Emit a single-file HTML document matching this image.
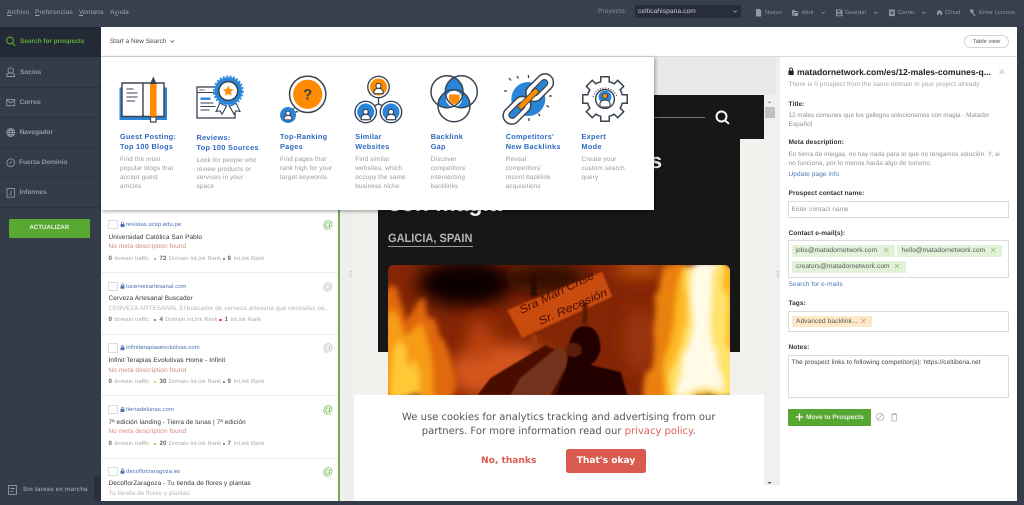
<!DOCTYPE html>
<html><head><meta charset="utf-8"><title>Prospects</title>
<style>
html,body{margin:0;padding:0;width:1024px;height:505px;overflow:hidden;background:#343b49}
#r{position:absolute;left:0;top:0;width:1024px;height:505px;overflow:hidden;background:#343b49;font-family:"Liberation Sans",Arial,sans-serif;filter:blur(.3px);text-rendering:geometricPrecision}
.a{position:absolute}
.t{position:absolute;white-space:nowrap;line-height:10px;height:10px}
.m{font-size:6.5px;color:#9aa4b5;letter-spacing:.1px}
.m u{text-decoration:underline}
.tb{font-size:5.7px;color:#8f99aa;letter-spacing:.1px}
.s{font-size:6.6px;color:#8e98a8;font-weight:bold;letter-spacing:-.08px}
.d{height:1px;background:#2b313d;left:0;width:101px}
.h{font-size:7.3px;line-height:10.2px;height:auto;color:#2c68c0;font-weight:bold;letter-spacing:.3px}
.p{font-size:6.4px;line-height:8.7px;height:auto;color:#9a9a9a;letter-spacing:.14px}
.dm{font-size:5.85px;color:#4c72b4;letter-spacing:.08px}
.ti{font-size:6.45px;color:#333;letter-spacing:.1px}
.no{font-size:6.45px;color:#d08a80;letter-spacing:.1px}
.gr{font-size:6.25px;color:#b5b5b5;letter-spacing:.1px}
.l{font-size:5.7px;color:#aaa;letter-spacing:.06px}
.n{font-size:6.2px;color:#666;font-weight:bold}
.dot{position:absolute;width:2.4px;height:2.4px;border-radius:50%}
.cb{position:absolute;left:108.3px;width:7.4px;height:7.4px;border:.7px solid #dcdcdc;background:#fff}
.dv{position:absolute;left:101px;width:237px;height:1px;background:#eee}
.lb{font-size:6.6px;font-weight:bold;color:#333;letter-spacing:.05px}
.x{font-size:6.4px;color:#909090;letter-spacing:.1px}
.lk{font-size:6.5px;color:#4c78b8;letter-spacing:.08px}
.box{position:absolute;left:788px;width:221px;border:.7px solid #dcdcdc;background:#fff;box-sizing:border-box}
.chip{position:absolute;background:#e2f2d8}
.ct{font-size:6.55px;color:#555;letter-spacing:.08px}
.cx{font-size:8px;color:#8fc27a}
</style></head><body><div id="r">

<!-- top bar -->
<div class="a" style="left:0;top:0;width:1024px;height:27px;background:#393f4d"></div>
<div class="t m" style="left:7px;top:7.7px"><u>A</u>rchivo</div>
<div class="t m" style="left:35px;top:7.7px"><u>P</u>referencias</div>
<div class="t m" style="left:79px;top:7.7px"><u>V</u>entana</div>
<div class="t m" style="left:110px;top:7.7px">A<u>y</u>uda</div>
<div class="t" style="left:598px;top:6.5px;font-size:6.4px;color:#8a94a6;letter-spacing:.2px">Proyecto:</div>
<div class="a" style="left:634.5px;top:4.5px;width:106.5px;height:13.5px;background:#272d39;border-radius:1px"></div>
<div class="t" style="left:638px;top:6.7px;font-size:6.6px;color:#cfd4dc;letter-spacing:.1px">celticahispana.com</div>
<div class="t tb" style="left:765px;top:7.7px">Nuevo</div>
<div class="t tb" style="left:801.5px;top:7.7px">Abrir</div>
<div class="t tb" style="left:845px;top:7.7px">Guardar</div>
<div class="t tb" style="left:898px;top:7.7px">Cerrar</div>
<div class="t tb" style="left:945px;top:7.7px">Cloud</div>
<div class="t tb" style="left:979px;top:7.7px">Enter License</div>

<!-- sidebar -->
<div class="a" style="left:0;top:27px;width:101px;height:30px;background:#232935"></div>
<div class="a d" style="top:87px"></div><div class="a d" style="top:117px"></div><div class="a d" style="top:147px"></div><div class="a d" style="top:177px"></div><div class="a d" style="top:207px"></div>
<div class="t s" style="left:20px;top:37.3px;color:#5da83a">Search for prospects</div>
<div class="t s" style="left:20px;top:68px">Socios</div>
<div class="t s" style="left:19.5px;top:98px">Correo</div>
<div class="t s" style="left:19.5px;top:128px">Navegador</div>
<div class="t s" style="left:19px;top:158px">Fuerza Dominio</div>
<div class="t s" style="left:19.5px;top:188px">Informes</div>
<div class="a" style="left:8.5px;top:218.5px;width:81.5px;height:19px;background:#58a832;border-radius:1px"></div>
<div class="t" style="left:8.5px;width:81.5px;text-align:center;top:223.3px;font-size:6.2px;font-weight:bold;color:#e8f3e0">ACTUALIZAR</div>
<div class="t" style="left:23px;top:485.3px;font-size:6.2px;color:#8e98a8;letter-spacing:.12px;font-weight:bold">Sin tareas en marcha</div>
<div class="a" style="left:94px;top:476px;width:7px;height:25px;background:#2a303c"></div>

<!-- main -->
<div class="a" style="left:101px;top:27px;width:916px;height:474px;background:#fff"></div>
<div class="a" style="left:101px;top:56px;width:916px;height:1px;background:#dcdcdc"></div>
<div class="t" style="left:110px;top:36.7px;font-size:6.4px;color:#444;letter-spacing:.05px">Start a New Search</div>
<div class="a" style="left:964px;top:35px;width:45px;height:13px;border:.7px solid #d5d5d5;border-radius:7px;box-sizing:border-box"></div>
<div class="t" style="left:964px;width:45px;text-align:center;top:36.5px;font-size:5.9px;color:#555">Table view</div>

<!-- preview -->
<div class="a" style="left:340px;top:57px;width:440px;height:444px;background:#efefef"></div>
<div class="a" style="left:353px;top:57px;width:423px;height:38px;background:#e9e9e9"></div>
<div class="a" style="left:353px;top:95px;width:411px;height:300px;background:#f3f1ed"></div>
<div class="a" style="left:378px;top:95px;width:362px;height:257px;background:#171717"></div>
<div class="a" style="left:640px;top:95px;width:124px;height:44px;background:#171717"></div>
<div class="a" style="left:378px;top:116.5px;width:327px;height:1px;background:#777"></div>
<div class="t" style="left:388px;top:197px;font-size:23px;line-height:12px;height:12px;font-weight:bold;color:#fff">con magia</div>
<div class="t" style="left:640px;top:157px;width:22px;font-size:21px;text-align:right;font-weight:bold;color:#f2f2f2">s</div>
<div class="t" style="left:388px;top:233px;font-size:12px;font-weight:bold;color:#b5b5b5;transform-origin:0 50%;transform:scaleX(.92)">GALICIA, SPAIN</div>
<div class="a" style="left:388px;top:245.5px;width:85px;height:1px;background:#999"></div>

<!-- fire -->
<svg class="a" style="left:387.5px;top:265px;border-radius:5px 5px 0 0" width="342.5" height="130" viewBox="387.5 265 342.5 130">
<defs>
<filter id="b6" x="-40%" y="-40%" width="180%" height="180%"><feGaussianBlur stdDeviation="8"/></filter>
<filter id="fl" x="-20%" y="-20%" width="140%" height="140%"><feTurbulence type="fractalNoise" baseFrequency=".04 .012" numOctaves="3" seed="4"/><feDisplacementMap in="SourceGraphic" scale="24" xChannelSelector="R" yChannelSelector="G"/><feGaussianBlur stdDeviation="3"/></filter>
<filter id="b1"><feGaussianBlur stdDeviation=".8"/></filter>
</defs>
<rect x="387" y="265" width="344" height="130" fill="#842505"/>
<g filter="url(#b6)">
<ellipse cx="465" cy="283" rx="48" ry="24" fill="#0e0200"/>
<ellipse cx="545" cy="278" rx="42" ry="16" fill="#300a01"/>
<ellipse cx="505" cy="372" rx="58" ry="28" fill="#d4541a"/>
<ellipse cx="480" cy="340" rx="14" ry="20" fill="#b8400c"/>
<ellipse cx="640" cy="340" rx="16" ry="34" fill="#9a3507"/>
<ellipse cx="640" cy="268" rx="26" ry="7" fill="#cf6410"/>
</g>
<g filter="url(#fl)">
<path d="M390 280 L406 320 L426 296 L444 342 L452 400 L380 400 L380 295Z" fill="#e0680a"/>
<path d="M392 305 L406 335 L424 322 L430 400 L385 400 L385 325Z" fill="#f89c16"/>
<path d="M396 340 L410 348 L418 400 L390 400Z" fill="#ffc836"/>
<path d="M650 400 L658 345 L652 295 L664 262 L740 262 L740 400Z" fill="#ea800c"/>
<path d="M662 400 L672 345 L670 300 L680 262 L740 262 L740 400Z" fill="#ffb820"/>
<path d="M670 400 L680 345 L682 262 L724 262 L726 330 L732 400Z" fill="#ffe46c"/>
<path d="M678 392 L688 340 L692 262 L714 262 L716 330 L720 392Z" fill="#fffbe6"/>
</g>
<g filter="url(#b1)">
<path d="M506.7 310 L601.7 271.7 L611.7 296.7 L521.7 338Z" fill="#c94c0e"/>
<rect x="531" y="335" width="6" height="30" fill="#9a3a0a"/>
<rect x="582" y="302" width="5" height="22" fill="#5a1a05"/>
<rect x="530" y="276" width="6" height="20" fill="#2c0a03"/>
<path d="M477 395 L490 378 L520 360 L545 345 L565 355 L566 378 L590 395Z" fill="#4a0f03"/>
<path d="M520 378 L560 345 L568 362 L550 395 L510 395Z" fill="#73301c"/>
<path d="M568 350 Q570 326 585 326 Q600 328 600 350 Q596 362 590 365 L620 372 L627 395 L555 395 L565 370Z" fill="#240502"/>
<ellipse cx="573" cy="350" rx="8" ry="7" fill="#5a1a08"/>
</g>
<g font-family="Liberation Sans,sans-serif" font-style="italic" font-size="11" fill="#4a0e04">
<text x="521" y="314" textLength="82" lengthAdjust="spacingAndGlyphs" transform="rotate(-26 521 314)">Sra Mari Crise</text>
<text x="540" y="325" textLength="74" lengthAdjust="spacingAndGlyphs" transform="rotate(-24 540 325)">Sr. Recesión</text>
</g>
</svg>

<!-- scrollbar -->
<div class="a" style="left:764px;top:95px;width:12px;height:390px;background:#f0f0f0"></div>
<div class="a" style="left:765px;top:107px;width:10px;height:11px;background:#c1c1c1"></div>

<!-- cookie -->
<div class="a" style="left:353.5px;top:394.5px;width:410.5px;height:106.5px;background:#fff"></div>
<div class="a" style="left:764px;top:485px;width:16px;height:16px;background:#fff"></div>
<div class="t" style="left:353.5px;width:410.5px;text-align:center;top:411.3px;font-family:'DejaVu Sans',sans-serif;font-size:10px;line-height:14px;height:14px;color:#555">We use cookies for analytics tracking and advertising from our</div>
<div class="t" style="left:353.5px;width:410.5px;text-align:center;top:425.3px;font-family:'DejaVu Sans',sans-serif;font-size:10px;line-height:14px;height:14px;color:#555">partners. For more information read our <span style="color:#e0605a">privacy policy</span>.</div>
<div class="t" style="left:481px;top:455.5px;font-family:'DejaVu Sans',sans-serif;font-weight:bold;font-size:9.1px;color:#dd5b52">No, thanks</div>
<div class="a" style="left:566px;top:449px;width:80px;height:24px;background:#db5a50;border-radius:2.5px"></div>
<div class="t" style="left:566px;width:80px;text-align:center;top:455.5px;font-family:'DejaVu Sans',sans-serif;font-weight:bold;font-size:9.1px;color:#fff">That's okay</div>

<!-- list -->
<div class="a" style="left:101px;top:200px;width:237px;height:301px;background:#fff"></div>
<div class="a" style="left:338px;top:205px;width:2px;height:296px;background:#6eb04a"></div>
<div class="dv" style="top:272px"></div><div class="dv" style="top:334px"></div><div class="dv" style="top:395px"></div><div class="dv" style="top:457.5px"></div>

<div class="cb" style="top:220px"></div><div class="t dm" style="left:126px;top:220px">revistas.ucsp.edu.pe</div>
<div class="t ti" style="left:108.5px;top:232.7px">Universidad Católica San Pablo</div>
<div class="t no" style="left:108.5px;top:242.3px">No meta description found</div>
<div class="t n" style="left:108.5px;top:253.7px">0</div><div class="t l" style="left:114.3px;top:253.7px">domain traffic</div><div class="dot" style="left:154px;top:257.5px;background:#6eb04a"></div><div class="t n" style="left:159.5px;top:253.7px">72</div><div class="t l" style="left:168.7px;top:253.7px">Domain InLink Rank</div><div class="dot" style="left:222.5px;top:257.5px;background:#d0401c"></div><div class="t n" style="left:227.5px;top:253.7px">8</div><div class="t l" style="left:233.7px;top:253.7px">InLink Rank</div>

<div class="cb" style="top:281.7px"></div><div class="t dm" style="left:126px;top:281.7px">tucervezartesanal.com</div>
<div class="t ti" style="left:108.5px;top:294.3px">Cerveza Artesanal Buscador</div>
<div class="t gr" style="left:108.5px;top:304px">CERVEZA ARTESANAL El buscador de cerveza artesana que necesitas pa...</div>
<div class="t n" style="left:108.5px;top:315.3px">0</div><div class="t l" style="left:114.3px;top:315.3px">domain traffic</div><div class="dot" style="left:154px;top:319.1px;background:#d0401c"></div><div class="t n" style="left:159.5px;top:315.3px">4</div><div class="t l" style="left:165.3px;top:315.3px">Domain InLink Rank</div><div class="dot" style="left:219.3px;top:319.1px;background:#d0401c"></div><div class="t n" style="left:224.5px;top:315.3px">1</div><div class="t l" style="left:230.5px;top:315.3px">InLink Rank</div>

<div class="cb" style="top:343.4px"></div><div class="t dm" style="left:126px;top:343.3px">infiniterapiasevolutivas.com</div>
<div class="t ti" style="left:108.5px;top:356px">Infinit Terapias Evolutivas Home - Infinit</div>
<div class="t no" style="left:108.5px;top:365.7px">No meta description found</div>
<div class="t n" style="left:108.5px;top:377px">0</div><div class="t l" style="left:114.3px;top:377px">domain traffic</div><div class="dot" style="left:154px;top:380.8px;background:#e8b820"></div><div class="t n" style="left:159.5px;top:377px">30</div><div class="t l" style="left:168.7px;top:377px">Domain InLink Rank</div><div class="dot" style="left:222.5px;top:380.8px;background:#d0401c"></div><div class="t n" style="left:227.5px;top:377px">9</div><div class="t l" style="left:233.7px;top:377px">InLink Rank</div>

<div class="cb" style="top:405px"></div><div class="t dm" style="left:126px;top:405px">tierradelunas.com</div>
<div class="t ti" style="left:108.5px;top:417.7px">7ª edición landing - Tierra de lunas | 7ª edición</div>
<div class="t no" style="left:108.5px;top:427.3px">No meta description found</div>
<div class="t n" style="left:108.5px;top:438.7px">0</div><div class="t l" style="left:114.3px;top:438.7px">domain traffic</div><div class="dot" style="left:154px;top:442.5px;background:#e89020"></div><div class="t n" style="left:159.5px;top:438.7px">20</div><div class="t l" style="left:168.7px;top:438.7px">Domain InLink Rank</div><div class="dot" style="left:222.5px;top:442.5px;background:#d0401c"></div><div class="t n" style="left:227.5px;top:438.7px">7</div><div class="t l" style="left:233.7px;top:438.7px">InLink Rank</div>

<div class="cb" style="top:466.7px"></div><div class="t dm" style="left:126px;top:466.7px">decoflorzaragoza.es</div>
<div class="t ti" style="left:108.5px;top:479.3px">DecoflorZaragoza - Tu tienda de flores y plantas</div>
<div class="t gr" style="left:108.5px;top:489px">Tu tienda de flores y plantas</div>

<div class="t" style="left:322px;width:12px;text-align:center;top:219.8px;font-size:10.5px;color:#6fb54b">@</div>
<div class="t" style="left:322px;width:12px;text-align:center;top:281.5px;font-size:10.5px;color:#bdbdbd">@</div>
<div class="t" style="left:322px;width:12px;text-align:center;top:343.1px;font-size:10.5px;color:#bdbdbd">@</div>
<div class="t" style="left:322px;width:12px;text-align:center;top:404.8px;font-size:10.5px;color:#6fb54b">@</div>
<div class="t" style="left:322px;width:12px;text-align:center;top:466.5px;font-size:10.5px;color:#6fb54b">@</div>

<!-- search panel -->
<div class="a" style="left:101px;top:57px;width:553px;height:153px;background:#fff;box-shadow:1px 1px 4px rgba(0,0,0,.4)"></div>
<div class="t h" style="left:120px;top:132px">Guest Posting:<br>Top 100 Blogs</div>
<div class="t p" style="left:120px;top:156.4px">Find the most<br>popular blogs that<br>accept guest<br>articles</div>
<div class="t h" style="left:196.5px;top:132.6px">Reviews:<br>Top 100 Sources</div>
<div class="t p" style="left:196.5px;top:157px">Look for people who<br>review products or<br>services in your<br>space</div>
<div class="t h" style="left:280px;top:132px">Top-Ranking<br>Pages</div>
<div class="t p" style="left:280px;top:156.4px">Find pages that<br>rank high for your<br>target keywords</div>
<div class="t h" style="left:355.3px;top:132px">Similar<br>Websites</div>
<div class="t p" style="left:355.3px;top:156.4px">Find similar<br>websites, which<br>occupy the same<br>business niche</div>
<div class="t h" style="left:430.7px;top:132px">Backlink<br>Gap</div>
<div class="t p" style="left:430.7px;top:156.4px">Discover<br>competitors'<br>intersecting<br>backlinks</div>
<div class="t h" style="left:505.7px;top:132px">Competitors'<br>New Backlinks</div>
<div class="t p" style="left:505.7px;top:156.4px">Reveal<br>competitors'<br>recent backlink<br>acquisitions</div>
<div class="t h" style="left:581.5px;top:132px">Expert<br>Mode</div>
<div class="t p" style="left:581.5px;top:156.4px">Create your<br>custom search<br>query</div>

<!-- right panel -->
<div class="a" style="left:780px;top:57px;width:237px;height:444px;background:#fff"></div>
<div class="t" style="left:797px;top:66.7px;font-size:8.6px;font-weight:bold;color:#222">matadornetwork.com/es/12-males-comunes-q...</div>
<div class="t" style="left:998px;top:66.5px;font-size:9px;color:#c4c4c4">✕</div>
<div class="t x" style="left:788.5px;top:80px;color:#a5a5a5">There is 0 prospect from the same domain in your project already</div>
<div class="t lb" style="left:788.5px;top:99.7px">Title:</div>
<div class="t x" style="left:788.5px;top:110.7px;letter-spacing:-.03px">12 males comunes que los gallegos solucionamos con magia - Matador</div>
<div class="t x" style="left:788.5px;top:120px">Español</div>
<div class="t lb" style="left:788.5px;top:138px">Meta description:</div>
<div class="t x" style="left:788.5px;top:150px;letter-spacing:.06px">En tierra de meigas, no hay nada para lo que no tengamos solución. Y, si</div>
<div class="t x" style="left:788.5px;top:159px">no funciona, por lo menos harás algo de turismo.</div>
<div class="t lk" style="left:788.5px;top:169.7px">Update page info</div>
<div class="t lb" style="left:788.5px;top:189px">Prospect contact name:</div>
<div class="box" style="top:200.5px;height:17px"></div>
<div class="t x" style="left:791.5px;top:204.5px">Enter contact name</div>
<div class="t lb" style="left:788.5px;top:228.5px">Contact e-mail(s):</div>
<div class="box" style="top:240px;height:37.5px"></div>
<div class="chip" style="left:791.5px;top:245px;width:103.5px;height:12px"></div>
<div class="chip" style="left:897px;top:245px;width:105px;height:12px"></div>
<div class="chip" style="left:791.5px;top:261px;width:114.5px;height:11.5px"></div>
<div class="t ct" style="left:795.5px;top:246px">jobs@matadornetwork.com</div><div class="t cx" style="left:883px;top:246px">✕</div>
<div class="t ct" style="left:901.7px;top:246px">hello@matadornetwork.com</div><div class="t cx" style="left:990px;top:246px">✕</div>
<div class="t ct" style="left:796px;top:262px">creators@matadornetwork.com</div><div class="t cx" style="left:893.5px;top:262px">✕</div>
<div class="t lk" style="left:788.5px;top:280px">Search for e-mails</div>
<div class="t lb" style="left:788.5px;top:299px">Tags:</div>
<div class="box" style="top:311px;height:21px"></div>
<div class="chip" style="left:791.5px;top:315.5px;width:80.5px;height:11.5px;background:#fde8c8"></div>
<div class="t ct" style="left:796px;top:316.5px">Advanced backlink...</div><div class="t cx" style="left:860px;top:316.5px;color:#e09a8a">✕</div>
<div class="t lb" style="left:788.5px;top:342.5px">Notes:</div>
<div class="box" style="top:354.5px;height:43px"></div>
<div class="t ct" style="left:791.5px;top:357.5px;color:#444;font-size:6.4px">The prospect links to following competitor(s): https://celtiberia.net</div>
<div class="a" style="left:788px;top:408.5px;width:82.5px;height:17px;background:#56a632;border-radius:1px"></div>
<div class="t" style="left:806px;top:412.6px;font-size:6.5px;font-weight:bold;color:#eaf5e2">Move to Prospects</div>

<!-- icon overlay -->
<svg class="a" style="left:0;top:0" width="1024" height="505" viewBox="0 0 1024 505" fill="none">
<defs>
<g id="pw"><circle cx="0" cy="-2.6" r="2.6" fill="#fff" stroke="#3a4350" stroke-width="1.2"/><path d="M-4.6 5.2v-1.4c0-2.6 2-4 4.6-4s4.6 1.4 4.6 4v1.4z" fill="#fff" stroke="#3a4350" stroke-width="1.2"/></g>
<clipPath id="cl"><circle cx="447" cy="91.7" r="16"/></clipPath>
<clipPath id="cr"><circle cx="461.3" cy="91.7" r="16"/></clipPath>
</defs>

<!-- sidebar icons -->
<g stroke="#5da83a" stroke-width="1.1"><circle cx="10" cy="40.5" r="3.4"/><path d="M12.6 43.2l2.6 2.8"/></g>
<g stroke="#8e98a8" stroke-width=".9">
<circle cx="10.7" cy="70.5" r="2.7"/><path d="M6.8 76.5v-1c0-1.8 1.6-2.5 3.9-2.5s3.9.7 3.9 2.5v1z"/>
<rect x="6.7" y="99.5" width="8" height="6.2"/><path d="M6.7 100l4 3 4-3"/>
<circle cx="10.7" cy="132.5" r="4"/><ellipse cx="10.7" cy="132.5" rx="1.7" ry="4"/><path d="M6.7 132.5h8M7.3 130.5h6.8M7.3 134.5h6.8"/>
<circle cx="10.7" cy="162.7" r="3.9"/><path d="M9.6 164l2.4-2.6"/>
<rect x="7" y="188.5" width="7.6" height="8.6"/><path d="M11 190.5v4h-1.5"/>
<rect x="8.5" y="485.5" width="8" height="9"/><path d="M10.3 488.5h4.4M10.3 491.3h3"/>
</g>

<!-- top icons -->
<g fill="#8f99aa">
<path d="M756 9h3.6l1.6 1.6V16.5h-5.2z"/>
<path d="M792 10h2.4l.8 1h2.4v1.2H794l-1.2 3.6H792zM794.4 13h4.4l-1.2 3h-4.2z"/>
<path d="M836 9.5h5.4l1 1v5.7H836zM837.2 10.5v1.8h3.4v-1.8zM837.2 13.6v1.8h4v-1.8z" fill-rule="evenodd"/>
<path d="M889 9.5h5.8v6.6H889z"/>
<path d="M937 15v-2a2.6 2.6 0 0 1 5.2-.1V15h-1.6v-1.6h-2V15z"/>
<circle cx="971.8" cy="11" r="1.8"/><path d="M972.6 12.2l3 3.2-.8.8-3-3.2z"/>
</g>
<g stroke="#8f99aa" stroke-width=".7">
<path d="M821.5 12l1.6 1.4 1.6-1.4M874 12l1.6 1.4 1.6-1.4M922 12l1.6 1.4 1.6-1.4"/>
<path d="M733.5 10.7l1.6 1.4 1.6-1.4" stroke="#aab"/>
</g>
<path d="M890.5 11.3l2.8 3M893.3 11.3l-2.8 3" stroke="#393f4d" stroke-width=".8"/>
<path d="M170.5 40.5l1.8 1.8 1.8-1.8" stroke="#555" stroke-width=".8"/>

<!-- book -->
<rect x="119.5" y="87.5" width="47.5" height="32.5" fill="#2a85d8"/>
<path d="M122 83h21v33.5h-21zM143 83h21v33.5h-21z" fill="#fff" stroke="#3a4350" stroke-width="1.4"/>
<path d="M126.5 89h7M126.5 93h11M126.5 97h11M126.5 101h8.5" stroke="#3a4350" stroke-width="1.1"/>
<rect x="150" y="84" width="6.6" height="33" fill="#ff8c00"/>
<path d="M150 84l3.3-7.5 3.3 7.5z" fill="#3a4350"/>
<rect x="150.5" y="117" width="5.6" height="5" fill="#fff" stroke="#3a4350" stroke-width="1.2"/>
<path d="M143 114.5v3" stroke="#3a4350" stroke-width="1.6"/>

<!-- reviews -->
<rect x="197" y="87" width="38" height="31" fill="#fff" stroke="#3a4350" stroke-width="1.3"/>
<path d="M197 92.5h24" stroke="#3a4350" stroke-width="1.1"/>
<path d="M199.5 90h5" stroke="#3a4350" stroke-width="1.3" stroke-dasharray="1.2 .8"/>
<rect x="200.5" y="97.5" width="10" height="2.4" fill="#2a85d8"/>
<path d="M200.5 103h13M200.5 106.5h15M200.5 110h9" stroke="#3a4350" stroke-width="1"/>
<path d="M220 103l-4 8.5 4-.8 2 3.5 4.5-8zM236 103l4 8.5-4-.8-2 3.5-4.5-8z" fill="#fff" stroke="#3a4350" stroke-width="1.1"/>
<circle cx="228.3" cy="91" r="13.8" fill="#2a85d8"/>
<circle cx="228.3" cy="91" r="14.6" stroke="#2a85d8" stroke-width="1.6" stroke-dasharray="2 1.5"/>
<circle cx="228.3" cy="91" r="9.4" fill="#fff" stroke="#3a4350" stroke-width="1.5"/>
<path d="M228.3 85.5l1.6 3.5 3.8.4-2.8 2.5.8 3.8-3.4-2-3.4 2 .8-3.8-2.8-2.5 3.8-.4z" fill="#ff8c00"/>

<!-- top ranking -->
<circle cx="307.7" cy="94.3" r="18.2" fill="#fff" stroke="#3a4350" stroke-width="1.5"/>
<path d="M294 108l-3 5 7-1.5" fill="#fff" stroke="#3a4350" stroke-width="1.3"/>
<circle cx="307.7" cy="94.3" r="14.6" fill="#ff8c00"/>
<text x="307.7" y="99.5" text-anchor="middle" font-family="Liberation Sans,sans-serif" font-weight="bold" font-size="15" fill="#3a4350">?</text>
<circle cx="288" cy="115" r="8" fill="#2a85d8"/>
<use href="#pw" transform="translate(288,115.5) scale(.85)"/>

<!-- similar -->
<path d="M378.5 98v6M378.5 104l-6 2.5M378.5 104l6 2.5" stroke="#3a4350" stroke-width="1.3"/>
<circle cx="378.5" cy="87" r="10.7" fill="#fff" stroke="#3a4350" stroke-width="1.4"/>
<circle cx="365.7" cy="112" r="10.7" fill="#fff" stroke="#3a4350" stroke-width="1.4"/>
<circle cx="391" cy="112" r="10.7" fill="#fff" stroke="#3a4350" stroke-width="1.4"/>
<circle cx="378.5" cy="87" r="8.5" fill="#ff8c00"/>
<circle cx="365.7" cy="112" r="8.5" fill="#2a85d8"/>
<circle cx="391" cy="112" r="8.5" fill="#2a85d8"/>
<use href="#pw" transform="translate(378.5,88.5)"/>
<use href="#pw" transform="translate(365.7,114.5)"/>
<use href="#pw" transform="translate(391,114.5)"/>

<!-- venn -->
<circle cx="461.3" cy="91.7" r="16" fill="#2a85d8" clip-path="url(#cl)"/>
<circle cx="454" cy="105.7" r="16" fill="#2a85d8" clip-path="url(#cl)"/>
<circle cx="454" cy="105.7" r="16" fill="#2a85d8" clip-path="url(#cr)"/>
<circle cx="454" cy="98.8" r="8" fill="#fff"/>
<path d="M449 94.5h10.6v4c0 2.8-2.4 4.7-5.3 6-2.9-1.3-5.3-3.2-5.3-6z" fill="#ff8c00"/>
<circle cx="447" cy="91.7" r="16" stroke="#3a4350" stroke-width="1.5"/>
<circle cx="461.3" cy="91.7" r="16" stroke="#3a4350" stroke-width="1.5"/>
<circle cx="454" cy="105.7" r="16" stroke="#3a4350" stroke-width="1.5"/>

<!-- links -->
<circle cx="528.3" cy="99" r="17" fill="#2a85d8"/>
<g stroke="#3a4350" stroke-width="1.3">
<path d="M509 78l2 2.5M528.5 75v3M507 91h-3M505 113h3M529 118v3M540 116l-1.6-2.4M549 107l-2.5-1.4M552 96h-3M517 76l1.4 2.6"/>
</g>
<g transform="translate(528.3,99) rotate(-45)">
<rect x="-32" y="-8.5" width="32" height="17" rx="8.5" fill="#fff" stroke="#3a4350" stroke-width="1.5"/>
<rect x="0" y="-8.5" width="32" height="17" rx="8.5" fill="#fff" stroke="#3a4350" stroke-width="1.5"/>
<rect x="-26" y="-3.4" width="20" height="6.8" rx="3.4" fill="#2a85d8" stroke="#3a4350" stroke-width="1.2"/>
<rect x="6" y="-3.4" width="20" height="6.8" rx="3.4" fill="#2a85d8" stroke="#3a4350" stroke-width="1.2"/>
<rect x="-13" y="-2.7" width="26" height="5.4" rx="1" fill="#ff8c00" stroke="#3a4350" stroke-width=".9"/>
</g>

<!-- gear -->
<g fill="#3a4350">
<circle cx="605" cy="99" r="18.5"/>
<rect x="600" y="76" width="10" height="46" rx=".6"/>
<rect x="600" y="76" width="10" height="46" rx=".6" transform="rotate(45 605 99)"/>
<rect x="600" y="76" width="10" height="46" rx=".6" transform="rotate(90 605 99)"/>
<rect x="600" y="76" width="10" height="46" rx=".6" transform="rotate(135 605 99)"/>
</g>
<g fill="#fff">
<circle cx="605" cy="99" r="17"/>
<rect x="601.5" y="77.5" width="7" height="43"/>
<rect x="601.5" y="77.5" width="7" height="43" transform="rotate(45 605 99)"/>
<rect x="601.5" y="77.5" width="7" height="43" transform="rotate(90 605 99)"/>
<rect x="601.5" y="77.5" width="7" height="43" transform="rotate(135 605 99)"/>
</g>
<path d="M593 97a12.5 12.5 0 0 1 24 0" stroke="#3a4350" stroke-width="1" stroke-dasharray="1.2 1.5"/>
<circle cx="605" cy="99" r="9.4" fill="#fff" stroke="#3a4350" stroke-width="1.4"/>
<circle cx="605" cy="97" r="6.4" fill="#2a85d8"/>
<circle cx="605" cy="96" r="2.6" fill="#ff8c00" stroke="#3a4350" stroke-width=".9"/>
<path d="M600 107v-3.5c0-2 2-3.4 5-3.4s5 1.4 5 3.4v3.5z" fill="#fff" stroke="#3a4350" stroke-width="1.1"/>

<!-- search icon in page -->
<g stroke="#fff" stroke-width="1.9"><circle cx="721.5" cy="116.5" r="5"/><path d="M725 120.5l4 3.3"/></g>

<!-- scrollbar arrows -->
<path d="M767.5 103l2-2 2 2z" fill="#999"/>
<path d="M767.5 482l2 2 2-2z" fill="#555"/>

<!-- grips -->
<g fill="#bbb"><rect x="350" y="271" width="1.4" height="1.2"/><rect x="350" y="273.5" width="1.4" height="1.2"/><rect x="350" y="276" width="1.4" height="1.2"/>
<rect x="777" y="271" width="1.4" height="1.2"/><rect x="777" y="273.5" width="1.4" height="1.2"/><rect x="777" y="276" width="1.4" height="1.2"/></g>

<!-- locks in list -->
<g fill="#4c72b4">
<rect x="120.5" y="224" width="4" height="3" rx=".4"/><rect x="120.5" y="285.7" width="4" height="3" rx=".4"/><rect x="120.5" y="347.3" width="4" height="3" rx=".4"/><rect x="120.5" y="409" width="4" height="3" rx=".4"/><rect x="120.5" y="470.7" width="4" height="3" rx=".4"/>
</g>
<g stroke="#4c72b4" stroke-width=".7">
<path d="M121.5 224v-.8a1 1 0 0 1 2 0v.8M121.5 285.7v-.8a1 1 0 0 1 2 0v.8M121.5 347.3v-.8a1 1 0 0 1 2 0v.8M121.5 409v-.8a1 1 0 0 1 2 0v.8M121.5 470.7v-.8a1 1 0 0 1 2 0v.8"/>
</g>

<!-- right panel icons -->
<rect x="788.5" y="70.5" width="5.2" height="4.5" rx=".5" fill="#222"/>
<path d="M789.7 70.5v-1.2a1.4 1.4 0 0 1 2.8 0v1.2" stroke="#222" stroke-width=".9"/>
<path d="M795.8 417h7.4M799.5 413.3v7.4" stroke="#fff" stroke-width="1.3"/>
<g stroke="#b8b8b8" stroke-width=".9">
<circle cx="880" cy="417" r="3.7"/><path d="M877.5 419.6l5-5.2"/>
<path d="M891 414.5h6.4M892 414.5v6.4h4.4v-6.4M893 414.5v-1.2h2.4v1.2"/>
</g>
</svg>
</div></body></html>
